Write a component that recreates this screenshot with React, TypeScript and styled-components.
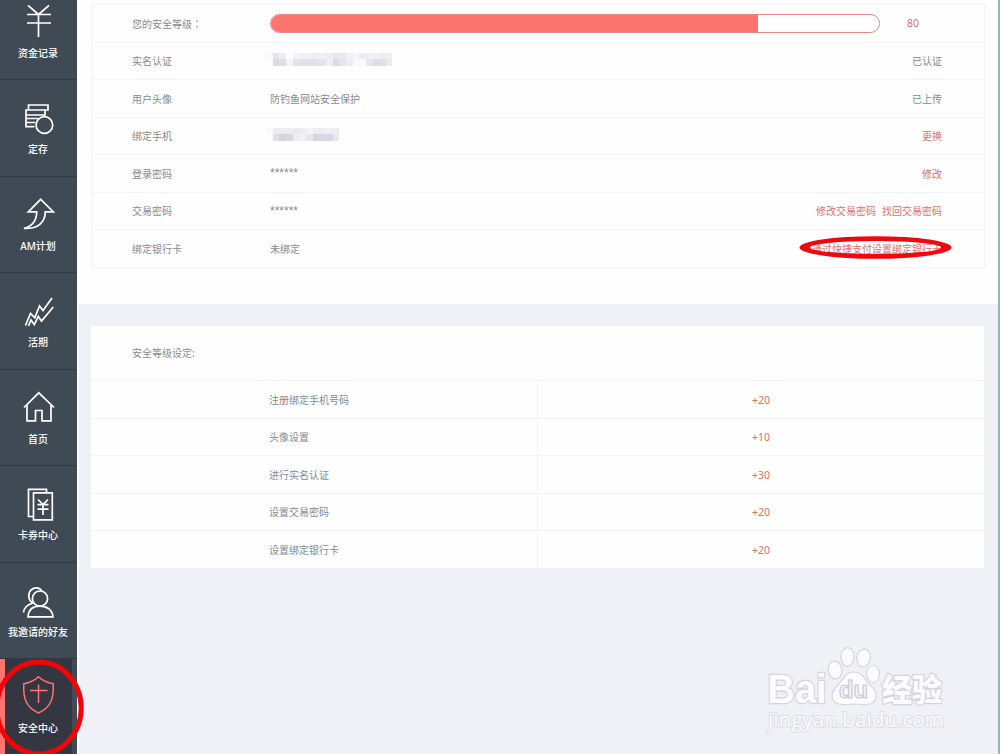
import React from "react";
import styled, { createGlobalStyle } from "styled-components";

const CORAL = "#fe746f";

const menu = [
  { icon: "yen", label: "资金记录" },
  { icon: "deposit", label: "定存" },
  { icon: "arrow", label: "AM计划" },
  { icon: "trend", label: "活期" },
  { icon: "home", label: "首页" },
  { icon: "coupon", label: "卡券中心" },
  { icon: "friends", label: "我邀请的好友" },
  { icon: "shield", label: "安全中心", active: true },
];

const levels = [
  { name: "注册绑定手机号码", score: "+20" },
  { name: "头像设置", score: "+10" },
  { name: "进行实名认证", score: "+30" },
  { name: "设置交易密码", score: "+20" },
  { name: "设置绑定银行卡", score: "+20" },
];

// masked values, two rows of blocks each
const maskedName = [
  "#f8f8fb", "#e4e4ea", "#ededf2", "#fcfcfe", "#f4f4f7", "#f1f1f5", "#f1f1f4", "#efeff3", "#f1f1f4", "#ebebf0", "#e6e6ec", "#e9e9ef", "#f2f2f6", "#f6f6fa", "#ececf2", "#f0f0f4", "#f1f1f5", "#eeeef2", "#efeff3",
  "#fefefe", "#d9d9e0", "#dfe0e6", "#f5f5f7", "#e2e2e7", "#e2e2e7", "#e0e0e6", "#e2e2e6", "#e3e3e8", "#efeff3", "#dbdce2", "#e4e4ea", "#ececf1", "#fafafe", "#fbfbff", "#e6e6eb", "#dedee5", "#dfdfe6", "#eaeaee",
];
const maskedPhone = [
  "#f9f9fb", "#eeeef2", "#ebebf1", "#ebebf0", "#e9e9f0", "#ececf2", "#f3f3f7", "#eeeef3", "#ececf1", "#efeff3", "#eeeef2",
  "#fefefe", "#e0e0e6", "#d3d3dc", "#d8d8df", "#ececf1", "#efeff4", "#e7e7ee", "#d4d5df", "#d7d8e3", "#d6d7e0", "#e8e8ed",
];

function MenuIcon({ name }: { name: string }) {
  return (
    <IconSvg viewBox="0 0 41 41" $active={name === "shield"}>
      {name === "yen" && <path d="M10 2.3l10.5 9.2L31 2.3M9 11.5h24M9 20h24M20.5 11.5V34" />}
      {name === "deposit" && (
        <>
          <path d="M10.5 11V6h19.5v5H8v16.7h8.5M8 11h19v5H8M8 19.5h12M8 23.5h9.5" />
          <circle cx="26.4" cy="26" r="8.3" />
        </>
      )}
      {name === "arrow" && (
        <path d="M22.7 3.3L35.3 15.8h-8C27.2 26.5 20 33 6 32.4c9-2 12.5-7.5 12.8-16.6H10.3z" />
      )}
      {name === "trend" && (
        <path d="M7.5 33.500l5-12 4.300 4.200L21.500 14l3.500 4.500L34 6M10.500 34l2.500-6 3.300 4.700 4-8.200 3.200 4.500L35.300 15" />
      )}
      {name === "home" && (
        <path d="M6 18.500L20.800 3.800 36 18.500M9 16v15.800h8.500V21.500h6.500v10.300h9V16" />
      )}
      {name === "coupon" && (
        <>
          <path d="M15.500 31.500h-5V4.300h18V7.500M15.500 7.800h18.800v27H15.500z" />
          <path d="M20 14.500l5 5 5-5M19.500 19.700h11M19.500 24.200h11M25 19.500V30" />
        </>
      )}
      {name === "friends" && (
        <>
          <circle cx="22" cy="16.600" r="7.600" />
          <path d="M10 34.800c.5-7 5-10.600 12-10.600s12.500 3.600 13 10.600zM15 21c-5-2.500-5.500-9.500-2-13 3.300-3 8.300-3 10.800.800M5.500 30.500c.5-4.500 3.500-7.800 9.500-9.500" />
        </>
      )}
      {name === "shield" && (
        <path d="M20.500 -1.200c4.300 4 9 6 14.700 7 .8 14-2 23.500-14.700 29.200C7.800 29.300 5 19.800 5.800 5.800c5.700-1 10.400-3 14.700-7zM20.500 6.500v18.500M12 12.500h17.500" />
      )}
    </IconSvg>
  );
}

function Mask({ cells }: { cells: string[] }) {
  return (
    <MaskGrid $cols={cells.length / 2}>
      {cells.map((c, i) => (
        <MaskCell key={i} $color={c} />
      ))}
    </MaskGrid>
  );
}

function Watermark() {
  return (
    <WatermarkSvg viewBox="0 0 190 100">
      <g fill="#fcfcfe" stroke="#d5d6dc" strokeWidth="1.2">
        <g strokeWidth="2.600" paintOrder="stroke">
          <text x="7.500" y="61.500" fontSize="40" fontWeight="700" textLength="59" lengthAdjust="spacingAndGlyphs">Bai</text>
          <text x="122" y="60" fontSize="31" fontWeight="900" fontFamily="'Noto Sans CJK SC', sans-serif" textLength="60" lengthAdjust="spacingAndGlyphs">经验</text>
        </g>
        <ellipse cx="75" cy="29" rx="6.800" ry="9" transform="rotate(-8 75 29)" />
        <ellipse cx="87.500" cy="16" rx="6.500" ry="9.300" />
        <ellipse cx="103.500" cy="17" rx="6.800" ry="9" transform="rotate(10 103.500 17)" />
        <ellipse cx="113" cy="33" rx="6.500" ry="8.500" />
        <path d="M94 31c8 0 10 6 14 11 5 5 9 8 8 14-1 7-7 8-13 7.500-6-.6-12-.6-18 0-7 .5-12-2-13-8-.7-6 4-9 8-14 4-5 6-10.500 14-10.500z" />
        <text x="79" y="57" fontSize="24" fontWeight="700" textLength="29" lengthAdjust="spacingAndGlyphs" fill="#f3f3f7" stroke="#c9cbd1">du</text>
      </g>
      <text x="8" y="86" fontSize="20.500" fontFamily="'Open Sans', sans-serif" textLength="176" lengthAdjust="spacingAndGlyphs" fill="#fcfcfe" stroke="#dcdde3" strokeWidth="2" style={{ paintOrder: "stroke" }}>jingyan.baidu.com</text>
    </WatermarkSvg>
  );
}

function App() {
  return (
    <Page>
      <GlobalStyle />
      <Sidebar>
        {menu.map((m) => (
          <MenuItem key={m.label} $active={m.active}>
            <MenuIcon name={m.icon} />
            <MenuLabel>{m.label}</MenuLabel>
          </MenuItem>
        ))}
      </Sidebar>
      <Main>
        <Account>
          <InfoTable>
            <InfoRow>
              <Name>您的安全等级<Colon>：</Colon></Name>
              <Track>
                <Fill />
              </Track>
              <Score>80</Score>
            </InfoRow>
            <InfoRow>
              <Name>实名认证</Name>
              <Value><Mask cells={maskedName} /></Value>
              <Action>已认证</Action>
            </InfoRow>
            <InfoRow>
              <Name>用户头像</Name>
              <Value>防钓鱼网站安全保护</Value>
              <Action>已上传</Action>
            </InfoRow>
            <InfoRow>
              <Name>绑定手机</Name>
              <Value><Mask cells={maskedPhone} /></Value>
              <Action $link>更换</Action>
            </InfoRow>
            <InfoRow>
              <Name>登录密码</Name>
              <Value><Stars>******</Stars></Value>
              <Action $link>修改</Action>
            </InfoRow>
            <InfoRow>
              <Name>交易密码</Name>
              <Value><Stars>******</Stars></Value>
              <Action $link><span>修改交易密码</span><span>找回交易密码</span></Action>
            </InfoRow>
            <InfoRow>
              <Name>绑定银行卡</Name>
              <Value>未绑定</Value>
              <Action $link>通过快捷支付设置绑定银行卡</Action>
            </InfoRow>
          </InfoTable>
        </Account>
        <LevelTable>
          <LevelHead>安全等级设定:</LevelHead>
          {levels.map((l) => (
            <LevelRow key={l.name}>
              <LevelName>{l.name}</LevelName>
              <LevelScore>{l.score}</LevelScore>
            </LevelRow>
          ))}
        </LevelTable>
      </Main>
      <LinkMark viewBox="0 0 154 24">
        <path fillRule="evenodd" d="M.5 11.500a76 11.300 0 1 0 152 0a76 11.300 0 1 0 -152 0zM11 11.500a65.500 6.500 0 1 1 131 0a65.500 6.500 0 1 1 -131 0z" />
      </LinkMark>
      <MenuMark viewBox="0 0 86 98">
        <ellipse cx="39" cy="51" rx="42.200" ry="46" />
      </MenuMark>
      <Watermark />
    </Page>
  );
}

// css styles
const GlobalStyle = createGlobalStyle`
  body {
    margin: 0;
    background: #f0f1f7;
  }
  * {
    box-sizing: border-box;
  }
`;

const Page = styled.div`
  position: relative;
  display: flex;
  width: 1000px;
  height: 754px;
  overflow: hidden;
  font-family: "Noto Sans", "Noto Sans CJK SC", sans-serif;
  font-size: 10px;
  color: #858c96;
`;

const Sidebar = styled.nav`
  flex: none;
  width: 77px;
  height: 754px;
  overflow: hidden;
  background: #404a54;
`;

const MenuItem = styled.div<{ $active?: boolean }>`
  display: flex;
  flex-direction: column;
  align-items: center;
  height: 96.5px;
  padding: 19px 1px 0 0;
  border-bottom: 1px solid #2f3843;
  ${(p) =>
    p.$active &&
    `
    border-left: 5px solid ${CORAL};
    border-right: 5px solid #414b55;
    background: #343741;
  `}

  &:first-child {
    margin-top: -16.5px;
  }
`;

const IconSvg = styled.svg<{ $active?: boolean }>`
  flex: none;
  width: 41px;
  height: 41px;
  overflow: visible;
  fill: none;
  stroke: ${(p) => (p.$active ? CORAL : "#fff")};
  stroke-width: ${(p) => (p.$active ? 1.5 : 1.7)};
`;

const MenuLabel = styled.span`
  margin-top: 1px;
  line-height: 16px;
  color: #fff;
  font-weight: 500;
  white-space: nowrap;
`;

const Main = styled.main`
  flex: 1;
  border-left: 2px solid #fcfcfd;
  border-right: 2px solid #8fb5c3;
`;

const Account = styled.section`
  height: 304px;
  padding: 4px 13px 0 12px;
  background: #fefefe;
`;

const InfoTable = styled.div`
  width: 894px;
  border: 1px solid #f3f4f6;
  border-bottom: 0;
`;

const InfoRow = styled.div`
  display: flex;
  align-items: center;
  height: 37.5px;
  padding: 0 42px 0 40px;
  border-bottom: 1px solid #f3f4f6;
`;

const Name = styled.div`
  width: 138px;
`;

const Colon = styled.span`
  font-family: "Noto Sans CJK TC", sans-serif;
`;

const Value = styled.div`
  display: flex;
  flex: 1;
`;

const Stars = styled.span`
  font-family: "Liberation Sans", sans-serif;
  font-size: 12px;
`;

const Action = styled.div<{ $link?: boolean }>`
  display: flex;
  gap: 6px;
  color: ${(p) => (p.$link ? "#e0706c" : "#858c96")};
`;

const Track = styled.div`
  width: 610px;
  height: 19px;
  overflow: hidden;
  border: 1px solid #e58782;
  border-radius: 10px;
`;

const Fill = styled.div`
  width: 487px;
  height: 100%;
  background: ${CORAL};
`;

const Score = styled.div`
  margin-left: 27px;
  font-size: 10.5px;
  color: #e0706c;
`;

const MaskGrid = styled.div<{ $cols: number }>`
  display: grid;
  grid-template-columns: repeat(${(p) => p.$cols}, 6.667px);
  grid-auto-rows: 6.667px;
  margin: -3px 0 0 -4px;
`;

const MaskCell = styled.i<{ $color: string }>`
  background: ${(p) => p.$color};
`;

const LevelTable = styled.section`
  width: 893px;
  margin: 22px 0 0 12px;
  background: #fefefe;
`;

const LevelHead = styled.div`
  height: 54px;
  padding-left: 41px;
  line-height: 54px;
`;

const LevelRow = styled.div`
  display: grid;
  grid-template-columns: 447px 1fr;
  height: 37.5px;
  border-top: 1px solid #f2f3f5;
`;

const LevelName = styled.div`
  display: flex;
  align-items: center;
  padding-left: 178px;
  border-right: 1px solid #f2f3f5;
`;

const LevelScore = styled.div`
  display: flex;
  align-items: center;
  justify-content: center;
  padding-top: 1px;
  color: #e0706c;
  font-size: 10.5px;
`;

const LinkMark = styled.svg`
  position: absolute;
  left: 799px;
  top: 236px;
  width: 154px;
  height: 24px;
  fill: #ec0a10;
`;

const MenuMark = styled.svg`
  position: absolute;
  left: 0;
  top: 657px;
  width: 86px;
  height: 98px;
  fill: none;
  stroke: #f20508;
  stroke-width: 5;
`;

const WatermarkSvg = styled.svg`
  position: absolute;
  left: 760px;
  top: 641px;
  width: 190px;
  height: 100px;
  font-family: "Liberation Sans", sans-serif;
`;

export default App;
